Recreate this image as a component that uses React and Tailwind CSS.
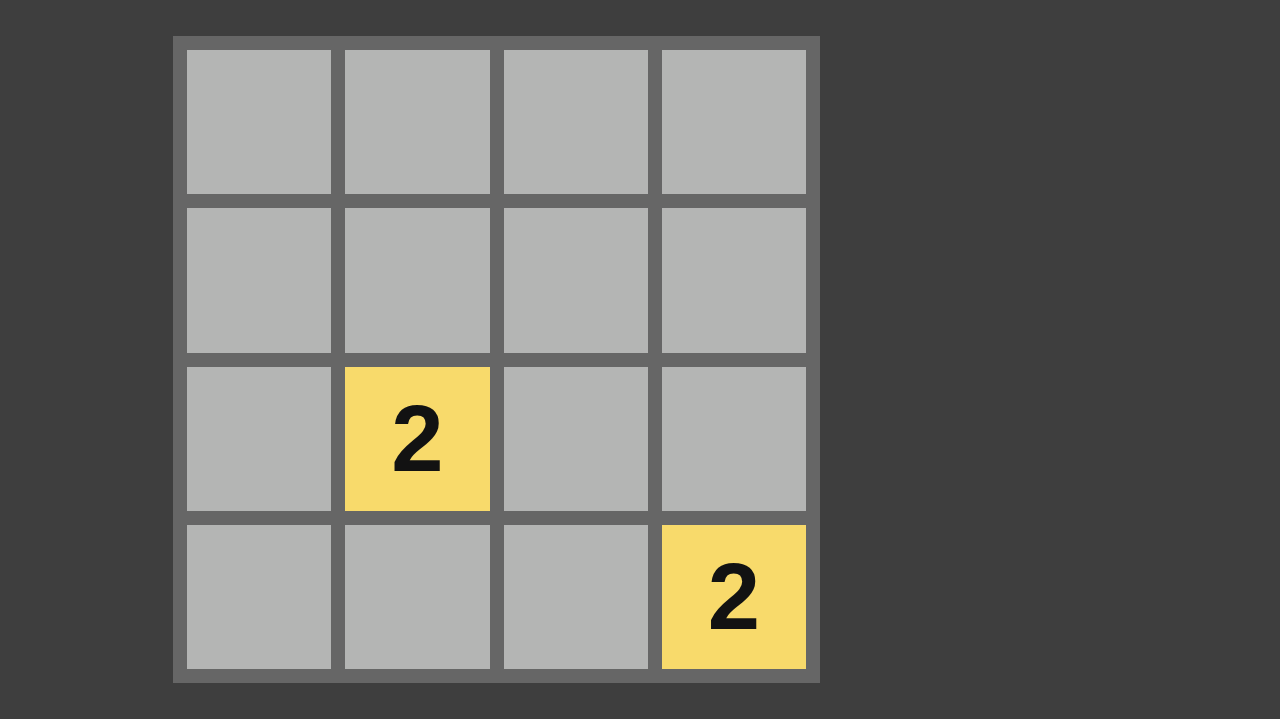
import React from "react";

// 4x4 board, 0 = empty cell
const board = [
  [0, 0, 0, 0],
  [0, 0, 0, 0],
  [0, 2, 0, 0],
  [0, 0, 0, 2],
];

function Cell({ value }) {
  if (!value) {
    return <div className="aspect-square bg-[#b4b5b4]" />;
  }
  return (
    <div className="aspect-square bg-[#f8da6b] flex items-center justify-center">
      <span className="text-[94px] leading-none font-bold text-[#121212] font-['Liberation_Sans',Arial,sans-serif]">
        {value}
      </span>
    </div>
  );
}

export default function App() {
  return (
    <div className="w-[1280px] h-[719px] bg-[#3e3e3e] pt-[36px] pl-[173px]">
      <div className="w-[647px] h-[647px] bg-[#666666] p-[14px] grid grid-cols-4 gap-[14px]">
        {board.flat().map((v, i) => (
          <Cell key={i} value={v} />
        ))}
      </div>
    </div>
  );
}
